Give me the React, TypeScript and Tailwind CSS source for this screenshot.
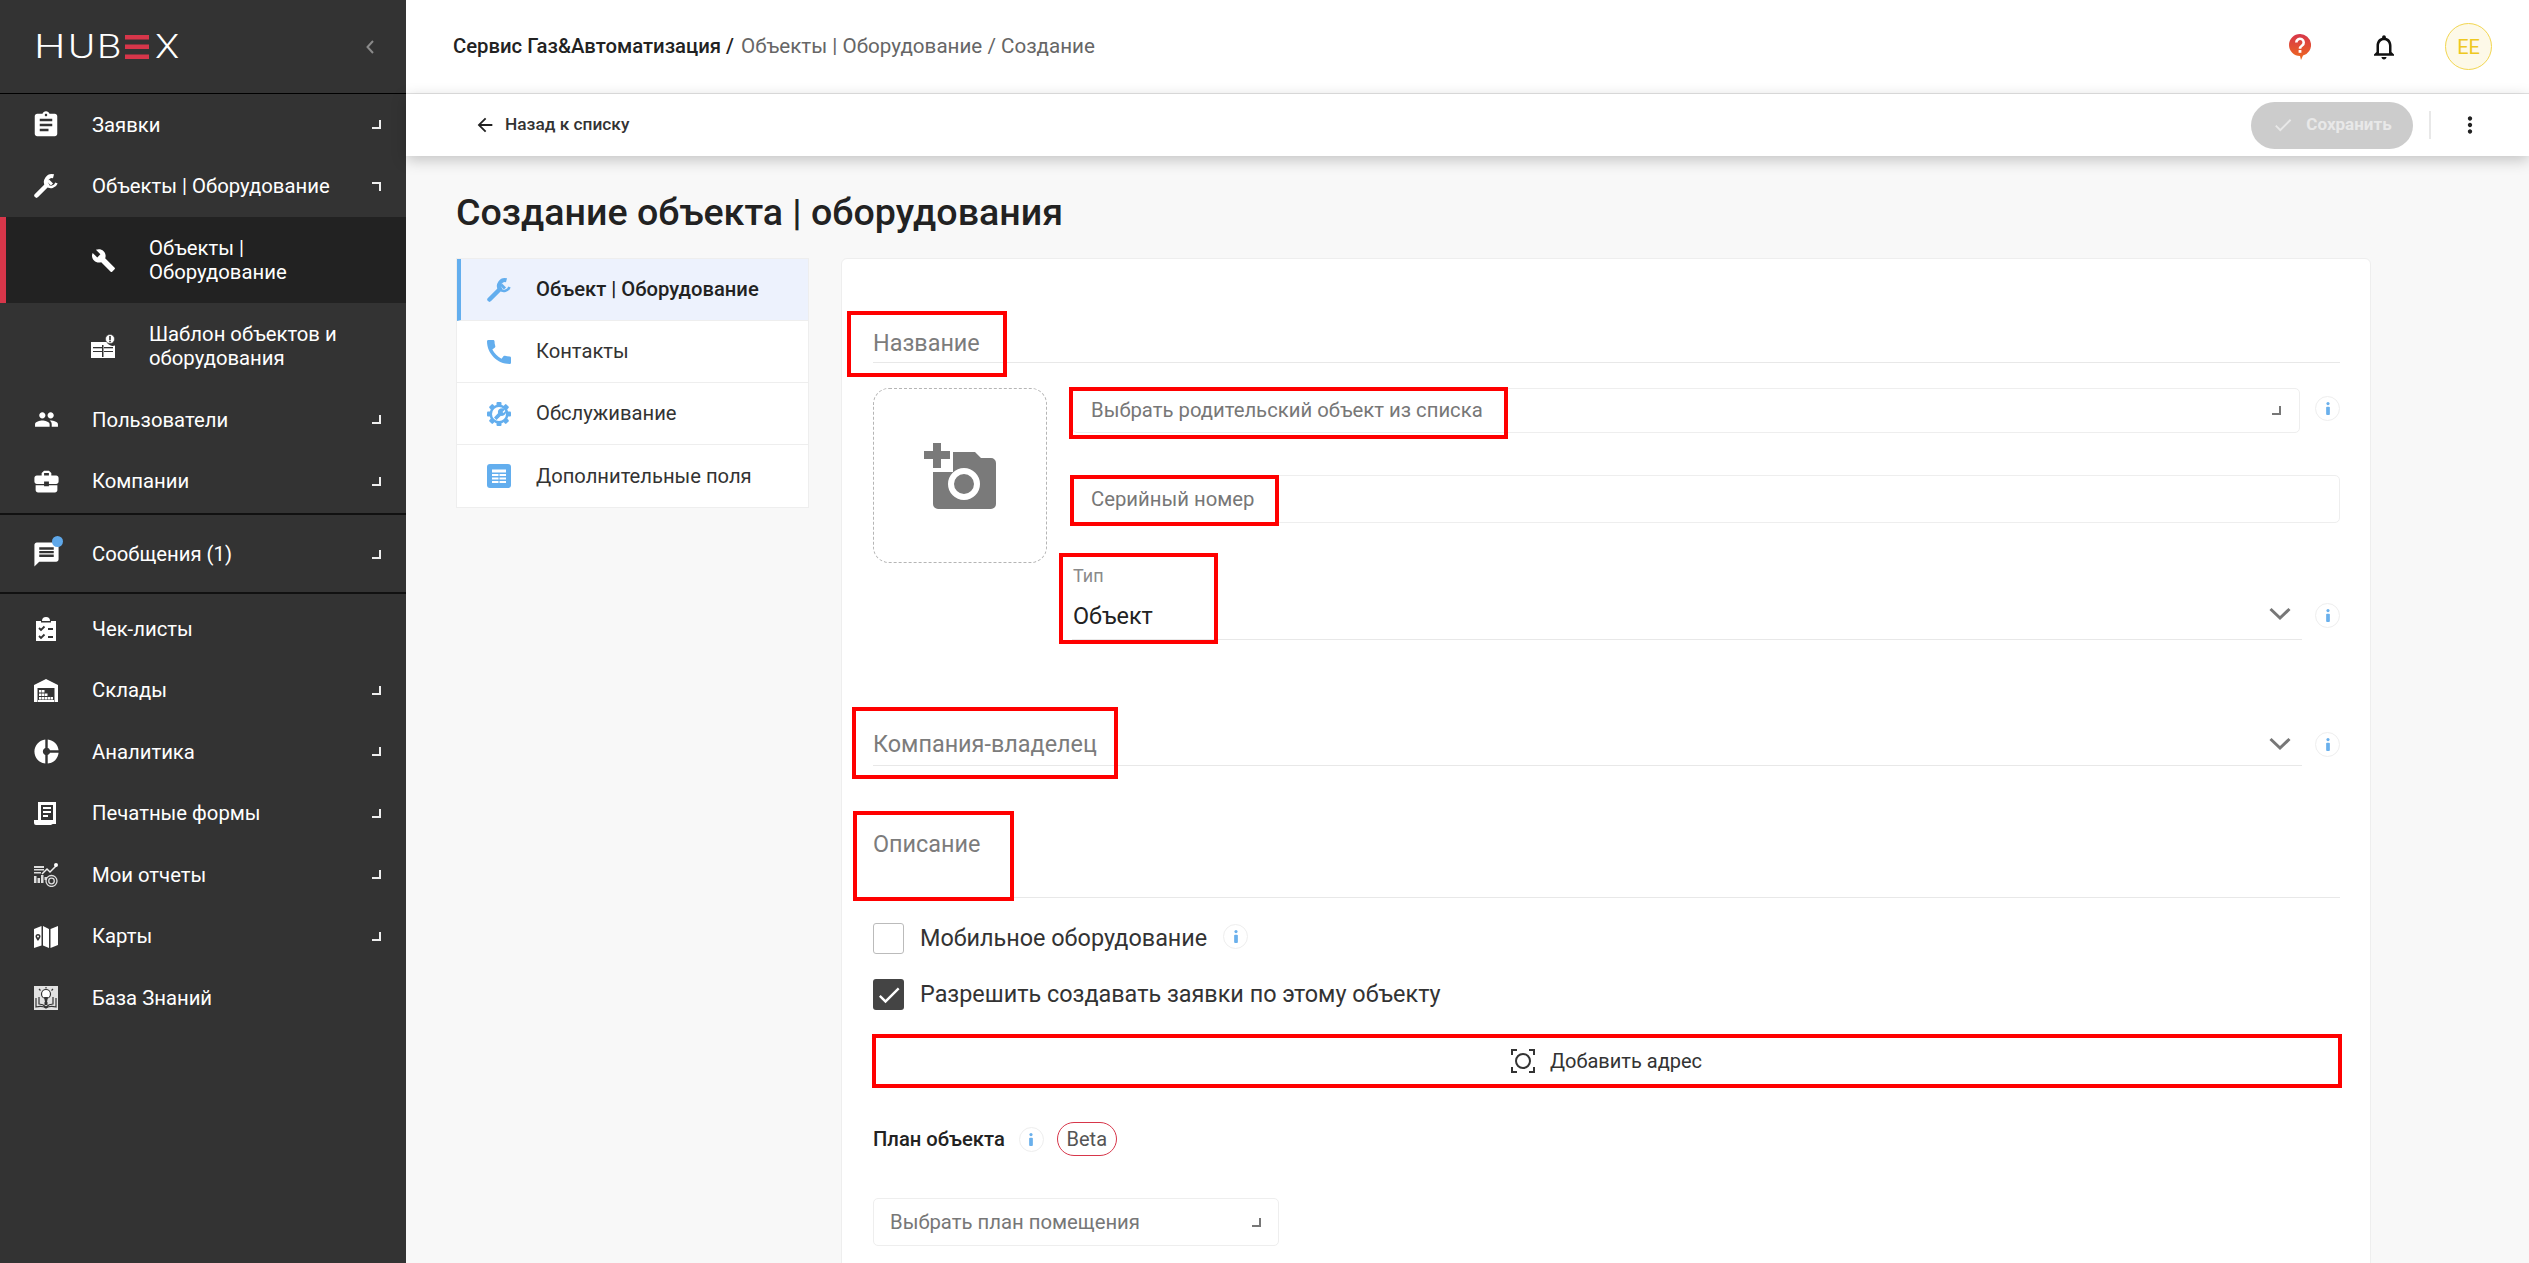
import { ReactNode } from "react";
import {
  MdArrowBack,
  MdAssignment,
  MdBuild,
  MdBusinessCenter,
  MdCall,
  MdCheck,
  MdDonutSmall,
  MdMessage,
  MdMoreVert,
  MdOutlineNotifications,
  MdPeople,
} from "react-icons/md";

const Corner = ({ open }: { open?: boolean }) => (
  <span
    className={
      open
        ? "block h-[9px] w-[9px] border-t-2 border-r-2 border-[#eee]"
        : "block h-[9px] w-[9px] border-r-2 border-b-2 border-[#eee]"
    }
  />
);

const SpannerIcon = ({ className }: { className: string }) => (
  <svg viewBox="0 0 24 24" className={`h-6 w-6 shrink-0 fill-none stroke-current ${className}`}>
    <path strokeWidth="4.500" strokeLinecap="round" d="M2.500 21.500L13 11" />
    <path strokeWidth="4" d="M19.500 2.300A6 6 0 0 0 13 11.500" />
    <path strokeWidth="2.500" d="M13 11.500a6 6 0 0 0 9.500-2.500" />
    <path strokeWidth="3" d="M14 6.500l4 4" />
  </svg>
);

const TemplateIcon = () => (
  <svg viewBox="0 0 24 24" className="h-6 w-6 fill-white">
    <path d="M0 8h15.500a7 7 0 0 0 8.500 3.500V24H0z" />
    <circle cx="19" cy="5" r="4.500" stroke="#333" strokeWidth="0.500" fill="#fff" />
    <rect x="18.200" y="2" width="1.600" height="4" fill="#333" />
    <rect x="18.200" y="6.700" width="1.600" height="1.500" fill="#333" />
    <rect x="2" y="13" width="9" height="1.300" fill="#333" />
    <rect x="13" y="13" width="9" height="1.300" fill="#333" />
    <rect x="11" y="11" width="1.500" height="12" fill="#333" />
    <rect x="2" y="17" width="9" height="1" fill="#333" />
    <rect x="13" y="17" width="9" height="1" fill="#333" />
  </svg>
);

const ChecklistIcon = () => (
  <svg viewBox="0 0 24 24" className="h-6 w-6">
    <path fill="#fff" d="M2 4h6a4 4 0 0 1 8 0h6v20H2z" />
    <path fill="#333" d="M7 4h10v1.500H7z" />
    <path fill="none" stroke="#333" strokeWidth="1.800" d="M5 11l2 2 3.500-3.500M5 19l2 2 3.500-3.500M14 12h5M14 20h5" />
  </svg>
);

const WarehouseIcon = () => (
  <svg viewBox="0 0 24 24" className="h-6 w-6">
    <path fill="#fff" d="M0 7L12 1l12 6v17h-3.500V10h-17v14H0z" />
    <path fill="#fff" d="M5 12h2.500v2.500H5zM8 12h2.500v2.500H8zM5 15.500h2.500V18H5zM8 15.500h2.500V18H8zM11 15.500h2.500V18H11zM5 19h2.500v2.500H5zM8 19h2.500v2.500H8zM11 19h2.500v2.500H11zM14 19h2.500v2.500H14zM17 19h2v2.500h-2z" />
    <path fill="#fff" d="M4 22h16v2H4z" />
  </svg>
);

const PrintIcon = () => (
  <svg viewBox="0 0 24 24" className="h-6 w-6">
    <path fill="#fff" d="M4 1h18v22H4z" />
    <rect x="7" y="4" width="12" height="15" fill="#333" />
    <path fill="#fff" d="M9 6h8v2H9zM9 10h8v2H9zM9 14h5v2H9z" />
    <path fill="#fff" d="M0 19h17v3a2 2 0 0 0 2 2H2a2 2 0 0 1-2-2z" />
  </svg>
);

const ReportIcon = () => (
  <svg viewBox="0 0 24 24" className="h-6 w-6">
    <path fill="#ddd" d="M0 3h10v2H0zM0 6h10v1.500H0zM0 9h7v1.500H0zM0 13h2.500v7H0zM3.500 15h2.500v5H3.500zM7 12h2.500v8H7zM10.500 14H13v3h-2.500z" />
    <path fill="none" stroke="#eee" strokeWidth="1.500" d="M8 11l5-5 3 3 6-6" />
    <circle cx="22" cy="2" r="2" fill="#fff" />
    <circle cx="17.500" cy="18" r="5.500" fill="none" stroke="#ddd" strokeWidth="1.300" />
    <circle cx="17.500" cy="18" r="2.800" fill="none" stroke="#ddd" strokeWidth="1.300" />
  </svg>
);

const MapIcon = () => (
  <svg viewBox="0 0 24 24" className="h-6 w-6">
    <path fill="#fff" d="M0 5l7.500-3v19.500L0 24zM9 2l6 3v19l-6-2.500zM16.500 5L24 2v19l-7.500 3z" />
    <path fill="#333" d="M4 10a2.500 2.500 0 0 1 2.500 2.500C6.500 14 4 17 4 17s-2.500-3-2.500-4.500A2.500 2.500 0 0 1 4 10z" />
    <circle cx="4" cy="12.500" r="1" fill="#fff" />
  </svg>
);

const KnowledgeIcon = () => (
  <svg viewBox="0 0 24 24" className="h-6 w-6">
    <rect width="24" height="24" fill="#e2e2e2" />
    <circle cx="12" cy="8" r="4.500" fill="#fff" stroke="#333" strokeWidth="1.200" />
    <path fill="#333" d="M10 11h4l-1 5h-2zM10.500 16h3v3h-3z" />
    <path fill="none" stroke="#333" strokeWidth="1.200" d="M2 12v9c4-1 7-1 10 1 3-2 6-2 10-1v-9M5 11v7c3 0 5 1 7 3 2-2 4-3 7-3v-7M12 1v1.500M5 3l1.500 1.500M19 3l-1.500 1.500" />
  </svg>
);

const ItemIcon = ({ children }: { children: ReactNode }) => (
  <span className="flex w-6 items-center justify-center text-[29px] text-white *:shrink-0">{children}</span>
);

const SideItem = ({
  icon,
  label,
  arrow = true,
  open,
}: {
  icon: ReactNode;
  label: string;
  arrow?: boolean;
  open?: boolean;
}) => (
  <div className="flex h-[61.500px] shrink-0 items-center pr-[25px] pl-[34px]">
    <ItemIcon>{icon}</ItemIcon>
    <span className="ml-[34px] flex-1 text-[20.300px] text-white">{label}</span>
    {arrow && <Corner open={open} />}
  </div>
);

const Sidebar = () => (
  <aside className="flex w-[406px] shrink-0 flex-col bg-[#333333]">
    <div className="flex h-[94px] shrink-0 items-center justify-between border-b border-black pr-[32px] pl-[34px]">
      <div className="flex items-center text-[33px] leading-none font-light text-white">
        <span className="inline-block w-[34px] origin-left scale-x-[1.350]">H</span>
        <span className="inline-block w-[29px] origin-left scale-x-[1.250]">U</span>
        <span className="inline-block w-[28px] origin-left scale-x-[1.200]">B</span>
        <svg viewBox="0 0 24 24" className="h-6 w-6 fill-[#d7364a]">
          <rect width="24" height="4.500" />
          <rect y="9.500" width="24" height="4.500" />
          <rect y="19.500" width="24" height="4.500" />
        </svg>
        <span className="ml-[6px] inline-block origin-left scale-x-[1.200]">X</span>
      </div>
      <svg viewBox="0 0 8 14" className="h-[14px] w-[8px] fill-none stroke-[#8a8a8a] stroke-2">
        <path d="M7 1L1.500 7L7 13" />
      </svg>
    </div>
    <SideItem icon={<MdAssignment className="text-[30px]" />} label="Заявки" />
    <SideItem icon={<SpannerIcon className="text-white" />} label="Объекты | Оборудование" open />
    <div className="flex h-[86px] shrink-0 items-center border-l-[6px] border-[#d7364a] bg-[#222222] pl-[85px]">
      <ItemIcon>
        <MdBuild className="text-[25px]" />
      </ItemIcon>
      <span className="ml-[34px] w-[214px] text-[20.300px] leading-[24px] text-white">Объекты | Оборудование</span>
    </div>
    <div className="flex h-[86px] shrink-0 items-center pl-[91px]">
      <ItemIcon>
        <TemplateIcon />
      </ItemIcon>
      <span className="ml-[34px] w-[214px] text-[20.300px] leading-[24px] text-white">Шаблон объектов и оборудования</span>
    </div>
    <SideItem icon={<MdPeople className="text-[25px]" />} label="Пользователи" />
    <SideItem icon={<MdBusinessCenter />} label="Компании" />
    <div className="mt-[1px] mb-[4px] flex h-[81px] shrink-0 items-center border-y-2 border-[#111] pt-[2px] pr-[25px] pl-[34px]">
      <span className="relative flex w-6 items-center justify-center text-[29px] text-white *:shrink-0">
        <MdMessage />
        <span className="absolute -top-[4px] -right-[5px] h-[11px] w-[11px] rounded-full bg-[#5fa8ea]" />
      </span>
      <span className="ml-[34px] flex-1 text-[20.300px] text-white">Сообщения (1)</span>
      <Corner />
    </div>
    <SideItem icon={<ChecklistIcon />} label="Чек-листы" arrow={false} />
    <SideItem icon={<WarehouseIcon />} label="Склады" />
    <SideItem icon={<MdDonutSmall />} label="Аналитика" />
    <SideItem icon={<PrintIcon />} label="Печатные формы" />
    <SideItem icon={<ReportIcon />} label="Мои отчеты" />
    <SideItem icon={<MapIcon />} label="Карты" />
    <SideItem icon={<KnowledgeIcon />} label="База Знаний" arrow={false} />
  </aside>
);

const InfoDot = () => (
  <span className="flex h-[25px] w-[25px] shrink-0 items-center justify-center rounded-full border border-[#eeeeee]">
    <svg viewBox="0 0 4 14" className="h-[13px] w-[4px] fill-[#6ab0ec]">
      <circle cx="2" cy="1.700" r="1.700" />
      <rect y="5" width="4" height="9" rx="1" />
    </svg>
  </span>
);

const Chevron = () => (
  <svg viewBox="0 0 22 14" className="h-[14px] w-[22px] fill-none stroke-[#777] stroke-[3]">
    <path d="M1.500 2L11 11L20.500 2" />
  </svg>
);

const TopBar = () => (
  <header className="flex h-[94px] shrink-0 items-center border-b border-[#e5e5e5] bg-white pr-[37px] pl-[47px]">
    <div className="flex-1 text-[20.300px]">
      <span className="font-medium text-[#222]">Сервис Газ&Автоматизация / </span>
      <span className="ml-[2px] text-[20.600px] text-[#666]">Объекты | Оборудование / Создание</span>
    </div>
    <svg viewBox="0 0 22 26" className="h-[26px] w-[22px]">
      <defs>
        <linearGradient id="help" x1="0" y1="0" x2="0" y2="1">
          <stop offset="0" stopColor="#d7364a" />
          <stop offset="1" stopColor="#ee6a1e" />
        </linearGradient>
      </defs>
      <path fill="url(#help)" d="M11 0a11 11 0 0 1 3 21.600L12 26l-1-4A11 11 0 0 1 11 0z" />
      <path fill="none" stroke="#fff" strokeWidth="2.600" d="M7.300 8.500a3.700 3.700 0 1 1 5.800 3c-1.400 1-2.100 1.500-2.100 3.200" />
      <rect x="9.600" y="16" width="2.800" height="2.800" fill="#fff" />
    </svg>
    <MdOutlineNotifications className="ml-[58px] text-[30px] text-[#111]" />
    <span className="ml-[46px] flex h-[47px] w-[47px] items-center justify-center rounded-full border border-[#f2d650] bg-[#fdf9e8] text-[20px] text-[#eec820]">
      EE
    </span>
  </header>
);

const ActionBar = () => (
  <div className="relative z-10 flex h-[62px] shrink-0 items-center bg-white pr-[46px] pl-[68px] shadow-[0_4px_14px_rgba(0,0,0,0.22)]">
    <MdArrowBack className="text-[22px] text-[#222]" />
    <span className="ml-[9px] flex-1 text-[17.300px] font-medium text-[#333]">Назад к списку</span>
    <button className="flex h-[47px] w-[162px] items-center justify-center gap-[12px] rounded-full bg-[#cccccc] text-[17px] font-bold text-[#e8e8e8]">
      <MdCheck className="text-[22px]" />
      Сохранить
    </button>
    <span className="mr-[26px] ml-[16px] h-[28px] w-[2px] bg-[#e8e8e8]" />
    <MdMoreVert className="text-[26px] text-[#222]" />
  </div>
);

const GearIcon = () => (
  <svg viewBox="0 0 24 24" className="h-6 w-6">
    <g fill="#63aeee">
      <circle cx="12" cy="12" r="9.500" />
      <rect x="9.500" y="0" width="5" height="24" rx="1" />
      <rect x="9.500" y="0" width="5" height="24" rx="1" transform="rotate(45 12 12)" />
      <rect x="9.500" y="0" width="5" height="24" rx="1" transform="rotate(90 12 12)" />
      <rect x="9.500" y="0" width="5" height="24" rx="1" transform="rotate(135 12 12)" />
    </g>
    <circle cx="12" cy="12" r="7" fill="#fff" />
    <path fill="#63aeee" d="M13.500 6.500a4.200 4.200 0 0 1 4.500 1L15.500 10l1 1 2.400-2.400a4.200 4.200 0 0 1-5 5.200L9.500 18 7 15.500l4-4.300a4.200 4.200 0 0 1 2.500-4.700z" />
  </svg>
);

const FieldsIcon = () => (
  <svg viewBox="0 0 24 24" className="h-6 w-6">
    <rect width="24" height="24" rx="3" fill="#63aeee" />
    <path fill="#fff" d="M5 5.500h14v3H5zM5 10h6.500v2H5zM12.500 10H19v2h-6.500zM5 13.500h6.500v2H5zM12.500 13.500H19v2h-6.500zM5 17h6.500v2H5zM12.500 17H19v2h-6.500z" />
  </svg>
);

const NavItem = ({ icon, label, active }: { icon: ReactNode; label: string; active?: boolean }) => (
  <div
    className={
      active
        ? "flex h-[62px] items-center border-b border-[#eeeeee] border-l-[4px] border-l-[#63aeee] bg-[#edf2fd] pl-[26px]"
        : "flex h-[62px] items-center border-b border-[#eeeeee] pl-[30px] last:border-b-0"
    }
  >
    <span className="flex w-6 items-center justify-center">{icon}</span>
    <span className={active ? "ml-[25px] text-[20.200px] font-medium text-[#222]" : "ml-[25px] text-[20.200px] text-[#333]"}>
      {label}
    </span>
  </div>
);

const SideNav = () => (
  <nav className="h-[250px] w-[353px] shrink-0 overflow-hidden border border-[#eeeeee] bg-white">
    <NavItem active icon={<SpannerIcon className="text-[#63aeee]" />} label="Объект | Оборудование" />
    <NavItem icon={<MdCall className="shrink-0 text-[32px] text-[#63aeee]" />} label="Контакты" />
    <NavItem icon={<GearIcon />} label="Обслуживание" />
    <NavItem icon={<FieldsIcon />} label="Дополнительные поля" />
  </nav>
);

const CameraIcon = () => (
  <svg viewBox="0 0 72 66" className="h-[66px] w-[72px]">
    <path fill="#7a7a7a" d="M9 9h42l6 6h10a5 5 0 0 1 5 5v41a5 5 0 0 1-5 5H14a5 5 0 0 1-5-5z" />
    <rect x="5" y="5" width="24" height="24" fill="#fff" />
    <path fill="#7a7a7a" d="M9 0h8v8h9v8h-9v9H9v-9H0V8h9z" />
    <circle cx="40" cy="41" r="13" fill="none" stroke="#fff" strokeWidth="6" />
  </svg>
);

const Mark = ({ className }: { className: string }) => (
  <span className={`pointer-events-none absolute border-[4px] border-[#ff0000] ${className}`} />
);

const SectionLabel = ({ children }: { children: ReactNode }) => (
  <div className="text-[23.400px] leading-[30px] text-[#7c7c7c]">{children}</div>
);

const Form = () => (
  <section className="relative w-[1530px] rounded-t-[6px] border border-[#eeeeee] bg-white pt-[69px] pr-[30px] pb-[20px] pl-[31px]">
    <div className="border-b border-[#e8e8e8] pb-[4px]">
      <SectionLabel>Название</SectionLabel>
    </div>
    <div className="mt-[25px] flex gap-[25px]">
      <div className="flex h-[175px] w-[174px] shrink-0 items-center justify-center rounded-[16px] border border-dashed border-[#b5b5b5]">
        <CameraIcon />
      </div>
      <div className="flex-1">
        <div className="flex items-center gap-[15px]">
          <div className="flex h-[45px] flex-1 items-center justify-between rounded-[5px] border border-[#eeeeee] pr-[18px] pl-[18px]">
            <span className="text-[20.300px] text-[#777]">Выбрать родительский объект из списка</span>
            <span className="block h-[9px] w-[9px] border-r-2 border-b-2 border-[#777]" />
          </div>
          <span className="-mt-[5px]">
            <InfoDot />
          </span>
        </div>
        <div className="mt-[42px] flex h-[48px] items-center rounded-[5px] border border-[#eeeeee] pl-[18px] text-[20.300px] text-[#777]">
          Серийный номер
        </div>
        <div className="mt-[41px] flex items-center gap-[13px]">
          <div className="flex flex-1 items-center justify-between border-b border-[#e8e8e8] pr-[11px] pb-[8px]">
            <div className="ml-[1px]">
              <div className="text-[18px] leading-[24px] text-[#8a8a8a]">Тип</div>
              <div className="mt-[13px] text-[23.400px] leading-[30px] text-[#222]">Объект</div>
            </div>
            <span className="mt-[32px]">
              <Chevron />
            </span>
          </div>
          <span className="mt-[26px]">
            <InfoDot />
          </span>
        </div>
      </div>
    </div>
    <div className="mt-[89px] flex items-center gap-[13px]">
      <div className="flex flex-1 items-center justify-between border-b border-[#e8e8e8] pr-[11px] pb-[6px]">
        <SectionLabel>Компания-владелец</SectionLabel>
        <Chevron />
      </div>
      <span className="-mt-[6px]">
        <InfoDot />
      </span>
    </div>
    <div className="mt-[63px] h-[69px] border-b border-[#e8e8e8]">
      <SectionLabel>Описание</SectionLabel>
    </div>
    <div className="mt-[25px] flex h-[31px] items-center">
      <span className="h-[31px] w-[31px] rounded-[3px] border border-[#bbbbbb]" />
      <span className="ml-[16px] text-[23.400px] text-[#333]">Мобильное оборудование</span>
      <span className="-mt-[5px] ml-[16px]">
        <InfoDot />
      </span>
    </div>
    <div className="mt-[25px] flex h-[31px] items-center">
      <span className="flex h-[31px] w-[31px] items-center justify-center rounded-[3px] bg-[#444444]">
        <MdCheck className="text-[28px] text-white" />
      </span>
      <span className="ml-[16px] text-[23.400px] text-[#333]">Разрешить создавать заявки по этому объекту</span>
    </div>
    <div className="mt-[26px] flex h-[50px] items-center justify-center gap-[15px] bg-white">
      <svg viewBox="0 0 24 24" className="h-[24px] w-[24px] fill-none stroke-[#333] stroke-2">
        <path d="M1 6V1h5M18 1h5v5M23 18v5h-5M6 23H1v-5" />
        <circle cx="12" cy="12" r="7" />
      </svg>
      <span className="text-[20px] text-[#333]">Добавить адрес</span>
    </div>
    <div className="mt-[36px] flex h-[34px] items-center">
      <span className="text-[20.200px] font-medium text-[#222]">План объекта</span>
      <span className="ml-[14px]">
        <InfoDot />
      </span>
      <span className="ml-[13px] flex h-[34px] w-[60px] items-center justify-center rounded-full border border-[#d7364a] text-[20px] text-[#555]">
        Beta
      </span>
    </div>
    <div className="mt-[42px] flex h-[48px] w-[406px] items-center justify-between rounded-[5px] border border-[#eeeeee] pr-[17px] pl-[16px]">
      <span className="text-[20.300px] text-[#777]">Выбрать план помещения</span>
      <span className="block h-[9px] w-[9px] border-r-2 border-b-2 border-[#777]" />
    </div>
    <Mark className="top-[52px] left-[5px] h-[66px] w-[160px]" />
    <Mark className="top-[128px] left-[227px] h-[52px] w-[439px]" />
    <Mark className="top-[216px] left-[228px] h-[51px] w-[209px]" />
    <Mark className="top-[294px] left-[217px] h-[91px] w-[159px]" />
    <Mark className="top-[448px] left-[10px] h-[72px] w-[266px]" />
    <Mark className="top-[552px] left-[11px] h-[90px] w-[161px]" />
    <Mark className="top-[775px] left-[30px] h-[54px] w-[1470px]" />
  </section>
);

export default function App() {
  return (
    <div className="flex h-[1263px] overflow-hidden bg-[#f8f8f8] font-['Roboto',sans-serif]">
      <Sidebar />
      <main className="flex min-w-0 flex-1 flex-col">
        <TopBar />
        <ActionBar />
        <div className="pl-[50px]">
          <h1 className="flex h-[102px] items-center pt-[10px] text-[37.600px] font-medium text-[#222]">
            Создание объекта | оборудования
          </h1>
          <div className="flex gap-[32px]">
            <SideNav />
            <Form />
          </div>
        </div>
      </main>
    </div>
  );
}
